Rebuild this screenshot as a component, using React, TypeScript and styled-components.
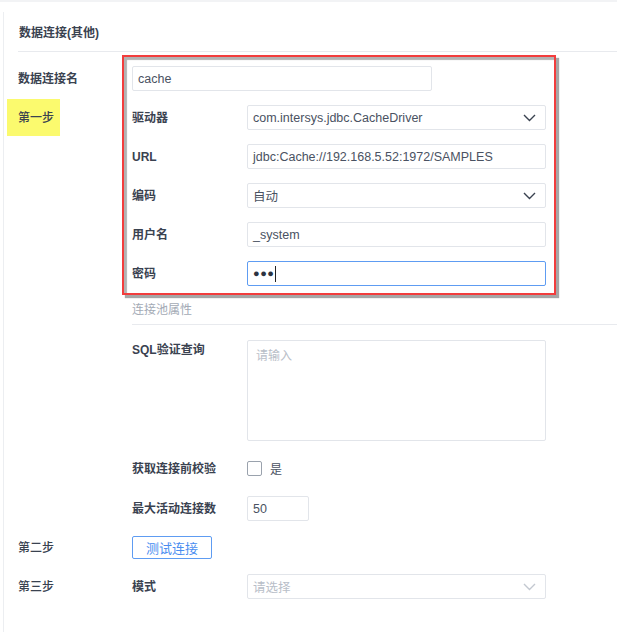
import styled, { createGlobalStyle } from "styled-components"

const Global = createGlobalStyle`
  html, body {
    margin: 0;
    padding: 0;
    background: #fff;
    font-family: "Liberation Sans", "Noto Sans CJK SC", sans-serif;
    font-size: 12px;
    color: #3d4757;
  }
`

const Page = styled.div`
  border-top: 2px solid #f2f3f5;
`

const Panel = styled.div`
  margin: 10px 0 0 3px;
  padding-left: 14px;
  border-left: 1px solid #eceef1;
  min-height: 620px;
`

const Title = styled.div`
  font-weight: 600;
  line-height: 18px;
  padding: 12px 0 9px 1px;
  border-bottom: 1px solid #e8eaee;
  color: #3a4250;
`

const Form = styled.div`
  position: relative;
  display: flex;
  flex-direction: column;
  gap: 14px;
  padding-top: 14px;
`

const Lower = styled.div`
  display: flex;
  flex-direction: column;
  gap: 15px;
  padding-top: 15px;
`

const Row = styled.div<{ top?: boolean; h?: number }>`
  display: grid;
  grid-template-columns: 114px 115px 300px;
  align-items: ${p => (p.top ? "start" : "center")};
  min-height: ${p => p.h ?? 25}px;
`

const Label = styled.div<{ light?: boolean }>`
  font-weight: ${p => (p.light ? 500 : 600)};
  line-height: 17px;
  padding-top: 2px;
  color: #3a4250;
  white-space: nowrap;
`

const Step = styled.div`
  justify-self: start;
  margin: -6px 0 -6px -11px;
  padding: 11px 6px 9px 11px;
  line-height: 17px;
  background: #fbfa6e;
  font-weight: 500;
  color: #3a4250;
`

const Box = styled.div<{ focus?: boolean; wide?: boolean; w?: number }>`
  box-sizing: border-box;
  height: 25px;
  width: ${p => (p.w ? `${p.w}px` : "299px")};
  ${p => (p.wide ? "grid-column: 2 / 4;" : "")}
  display: flex;
  align-items: center;
  justify-content: space-between;
  padding: 0 9px 0 5px;
  border: 1px solid ${p => (p.focus ? "#5e9cf2" : "#e2e5ea")};
  border-radius: 2px;
  background: #fff;
  color: #4a5262;
  font-size: 12.5px;
  white-space: nowrap;
`

const Placeholder = styled.span`
  color: #b8bec8;
`

const Area = styled.div`
  box-sizing: border-box;
  width: 299px;
  height: 101px;
  padding: 7px 8px;
  border: 1px solid #e2e5ea;
  border-radius: 2px;
  line-height: 16px;
`

const Dots = styled.span`
  font-size: 11px;
  letter-spacing: 0.5px;
  color: #2c3340;
`

const Caret = styled.span`
  display: inline-block;
  width: 1px;
  height: 16px;
  margin-left: 1px;
  background: #222;
  vertical-align: middle;
`

const SectionHead = styled.div`
  margin: 16px 0 0 114px;
  padding-bottom: 5px;
  border-bottom: 1px solid #e8eaee;
  color: #a3aab5;
  line-height: 17px;
`

const CheckWrap = styled.div`
  display: flex;
  align-items: center;
  gap: 8px;
  color: #4a5262;
`

const Check = styled.span`
  box-sizing: border-box;
  width: 15px;
  height: 15px;
  border: 1px solid #9aa2ad;
  border-radius: 2px;
`

const ButtonCell = styled.div`
  display: flex;
`

const Button = styled.button`
  box-sizing: border-box;
  width: 80px;
  height: 23px;
  padding: 0;
  background: #fff;
  border: 1px solid #5e9cf2;
  border-radius: 2px;
  color: #4a8df0;
  font-family: inherit;
  font-size: 13px;
`

const Mark = styled.div`
  position: absolute;
  left: 104px;
  top: 3px;
  width: 434px;
  height: 240px;
  box-sizing: border-box;
  border: 2px solid #f23d3d;
  box-shadow: 3px 3px 1px rgba(0, 0, 0, 0.35), inset 3px 3px 1px rgba(0, 0, 0, 0.3);
  pointer-events: none;
`

const Chevron = ({ faint }: { faint?: boolean }) => (
  <svg width="13" height="8" viewBox="0 0 13 8">
    <polyline
      points="1,1 6.5,6.5 12,1"
      fill="none"
      stroke={faint ? "#c3c8d0" : "#3a4250"}
      strokeWidth="1.4"
    />
  </svg>
)

export default function App() {
  return (
    <Page>
      <Global />
      <Panel>
        <Title>数据连接(其他)</Title>
        <Form>
          <Row>
            <Label>数据连接名</Label>
            <Box wide w={300}>cache</Box>
          </Row>
          <Row>
            <Step>第一步</Step>
            <Label>驱动器</Label>
            <Box>
              com.intersys.jdbc.CacheDriver
              <Chevron />
            </Box>
          </Row>
          <Row>
            <span />
            <Label>URL</Label>
            <Box>jdbc:Cache://192.168.5.52:1972/SAMPLES</Box>
          </Row>
          <Row>
            <span />
            <Label>编码</Label>
            <Box>
              自动
              <Chevron />
            </Box>
          </Row>
          <Row>
            <span />
            <Label>用户名</Label>
            <Box>_system</Box>
          </Row>
          <Row>
            <span />
            <Label>密码</Label>
            <Box focus>
              <span>
                <Dots>●●●</Dots>
                <Caret />
              </span>
            </Box>
          </Row>
          <Mark />
        </Form>
        <SectionHead>连接池属性</SectionHead>
        <Lower>
          <Row top>
            <span />
            <Label>SQL验证查询</Label>
            <Area>
              <Placeholder>请输入</Placeholder>
            </Area>
          </Row>
          <Row>
            <span />
            <Label>获取连接前校验</Label>
            <CheckWrap>
              <Check />
              是
            </CheckWrap>
          </Row>
          <Row>
            <span />
            <Label>最大活动连接数</Label>
            <Box w={62}>50</Box>
          </Row>
          <Row h={23}>
            <Label light>第二步</Label>
            <ButtonCell>
              <Button>测试连接</Button>
            </ButtonCell>
          </Row>
          <Row>
            <Label light>第三步</Label>
            <Label>模式</Label>
            <Box>
              <Placeholder>请选择</Placeholder>
              <Chevron faint />
            </Box>
          </Row>
        </Lower>
      </Panel>
    </Page>
  )
}
